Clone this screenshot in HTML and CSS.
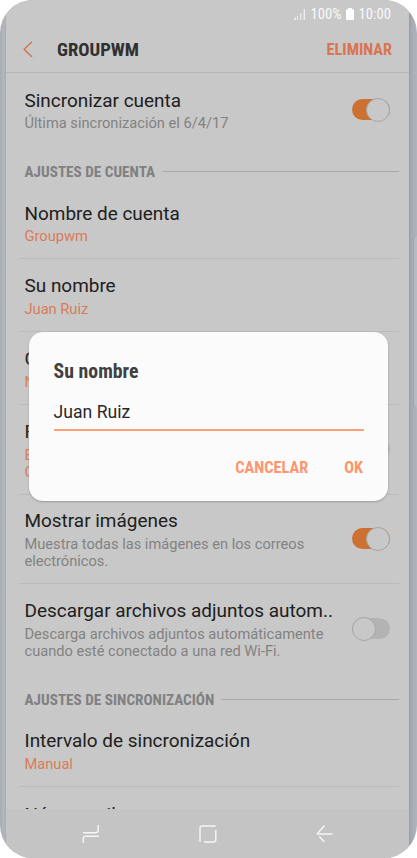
FILE: index.html
```html
<!DOCTYPE html>
<html lang="es">
<head>
<meta charset="utf-8">
<title>Groupwm</title>
<link rel="stylesheet" href="styles.css">
</head>
<body>
<div class="phone">
  <main class="screen">
    <div class="status">
      <svg class="signal" width="13" height="12" viewBox="0 0 13 12"><path d="M0 12L3 9V12ZM4 8H5V12H4ZM7.2 5H8.4V12H7.2ZM10.6 1H12V12H10.6Z" fill="#eee"/></svg>
      <span class="percent">100%</span>
      <svg class="battery" width="8" height="12" viewBox="0 0 8 12"><path d="M2 0H6V1.3H7Q8 1.3 8 2.3V11Q8 12 7 12H1Q0 12 0 11V2.3Q0 1.3 1 1.3H2Z" fill="#fff"/></svg>
      <span class="clock">10:00</span>
    </div>
    <header class="bar">
      <svg class="back" width="10" height="17" viewBox="0 0 10 17"><path d="M9 .8L1.2 8.3L9 16" fill="none" stroke="#d87550" stroke-width="1.5"/></svg>
      <h1 class="cond">GROUPWM</h1>
      <span class="cond delete">ELIMINAR</span>
    </header>
    <section class="list">
      <div class="item first">
        <div class="text"><div class="title">Sincronizar cuenta</div><div class="sub">Última sincronización el 6/4/17</div></div>
        <div class="switch on"></div>
      </div>
      <div class="section"><span class="cond">AJUSTES DE CUENTA</span></div>
      <div class="item line name"><div class="text"><div class="title">Nombre de cuenta</div><div class="sub accent">Groupwm</div></div></div>
      <div class="item line"><div class="text"><div class="title">Su nombre</div><div class="sub accent">Juan Ruiz</div></div></div>
      <div class="item line"><div class="text"><div class="title">C</div><div class="sub accent">N</div></div></div>
      <div class="item line tall"><div class="text"><div class="title">F</div><div class="sub accent">E<br>C</div></div><div class="switch"></div></div>
      <div class="item line tall images"><div class="text"><div class="title">Mostrar imágenes</div><div class="sub">Muestra todas las imágenes en los correos<br>electrónicos.</div></div><div class="switch on"></div></div>
      <div class="item download"><div class="text"><div class="title">Descargar archivos adjuntos autom..</div><div class="sub">Descarga archivos adjuntos automáticamente<br>cuando esté conectado a una red Wi-Fi.</div></div><div class="switch"></div></div>
      <div class="section second"><span class="cond">AJUSTES DE SINCRONIZACIÓN</span></div>
      <div class="item line"><div class="text"><div class="title">Intervalo de sincronización</div><div class="sub accent">Manual</div></div></div>
      <div class="item last"><div class="text"><div class="title">Número sil</div></div></div>
    </section>
    <nav class="nav">
      <svg width="18" height="20" viewBox="0 0 18 20"><path d="M1 8.7H13.5Q16.2 8.7 16.2 6V1M17 12.2H3.5Q1.3 12.2 1.3 15V19" /></svg>
      <svg width="18" height="18" viewBox="0 0 18 18"><path d="M1 17V3Q1 1 3 1H16.8M16.8 5V14.5Q16.8 17 14.3 17H5"/></svg>
      <svg width="18" height="18" viewBox="0 0 18 18"><path d="M8.5 .8L1 9M3.3 11.5L8.5 17M1 9H16.5"/></svg>
    </nav>
  </main>
  <div class="edge"></div>
  <div class="dialog">
    <h2 class="cond">Su nombre</h2>
    <div class="field">Juan Ruiz</div>
    <div class="actions"><span class="cond">CANCELAR</span><span class="cond">OK</span></div>
  </div>
</div>
</body>
</html>
```
FILE: styles.css
```css
* { box-sizing: border-box; }
body { margin: 0; background: #fff; font-family: Roboto, sans-serif; }
.phone { position: relative; width: 417px; height: 858px; padding: 0 8px 0 6px; overflow: hidden; border-radius: 33px; background: linear-gradient(90deg, #a9abb4 0, #b5b7be 4px, #aaa 6px, #aaa 408px, #9b9da5 409px, #aaacb5 412px, #b1b3bb 417px); }
.screen { height: 858px; display: flex; flex-direction: column; background: #c8c8c8; }
.cond { font-family: "Roboto Condensed", Roboto, sans-serif; font-stretch: 75%; font-weight: 700; white-space: nowrap; }
.status { height: 27px; padding: 0 18px 0 0; display: flex; align-items: center; justify-content: flex-end; color: #f8f8f8; font-size: 14.7px; font-stretch: 87%; }
.signal { margin-right: 5px; }
.battery { margin: 0 5px 0 4px; }
.bar { height: 46px; border-bottom: 1px solid #b7b7b7; display: flex; align-items: center; padding: 0 17px 0 17px; }
.bar h1 { margin: 0 auto 0 24px; font-size: 18.7px; color: #303030; }
.delete { font-size: 16.2px; color: #d87550; }
.list { flex: 1; overflow: hidden; }
.item { height: 73px; margin: 0 10px 0 13px; padding: 15px 9px 0 5.5px; display: flex; justify-content: space-between; }
.first { height: 84px; padding-top: 16px; }
.name { padding-top: 16px; }
.name .accent { margin-top: 2px; }
.line { border-bottom: 1px solid #bababa; }
.tall { height: 90px; }
.images { height: 89px; padding-top: 14px; }
.images .sub, .download .sub { margin-top: 3px; }
.download { height: 101px; }
.last { padding-top: 16px; }
.title { font-size: 18.95px; line-height: 24px; color: #202020; white-space: nowrap; }
.sub { font-size: 14.65px; line-height: 17px; margin-top: 2px; color: #828282; white-space: nowrap; }
.accent { color: #d97c58; margin-top: 3px; }
.section { height: 29px; margin: 0 10px 0 18.5px; display: flex; align-items: center; font-size: 15.2px; color: #808080; }
.section::after { content: ""; flex: 1; height: 1px; margin-left: 7px; background: #a8a8a8; }
.switch { flex: none; width: 38px; height: 21px; margin-top: 19px; border-radius: 11px; background: #b3b3b3; display: flex; align-items: center; }
.first .switch { margin-top: 10px; }
.switch::before { content: ""; width: 22px; height: 22px; flex: none; border-radius: 50%; background: #c8c8c8; border: 1px solid #a5a5a5; }
.on { background: #cd7132; justify-content: flex-end; }
.nav { height: 49px; flex: none; background: #c4c4c4; display: flex; align-items: center; padding-left: 76px; gap: 99px; }
.nav path { fill: none; stroke: #f5f5f5; stroke-width: 1.5; }
.edge { position: absolute; right: 0; top: 236px; width: 4px; height: 172px; background: #b9bbc3; border-left: 1px solid #a1a3ab; border-radius: 4px 0 0 4px; }
.dialog { position: absolute; left: 29px; top: 332px; width: 359px; height: 169px; padding: 28px 24px 0 24.6px; border-radius: 14px; background: #fbfbfb; box-shadow: 0 1px 2px #999; }
.dialog h2 { margin: 0; font-size: 19.8px; line-height: 24px; color: #404040; }
.field { height: 47px; border-bottom: 2px solid #fc9f7a; padding-top: 16px; font-size: 17.6px; line-height: 24px; color: #292929; }
.actions { display: flex; justify-content: flex-end; gap: 36px; margin: 25px 1px 0 0; font-size: 16.3px; line-height: 24px; color: #ff966f; }
```
